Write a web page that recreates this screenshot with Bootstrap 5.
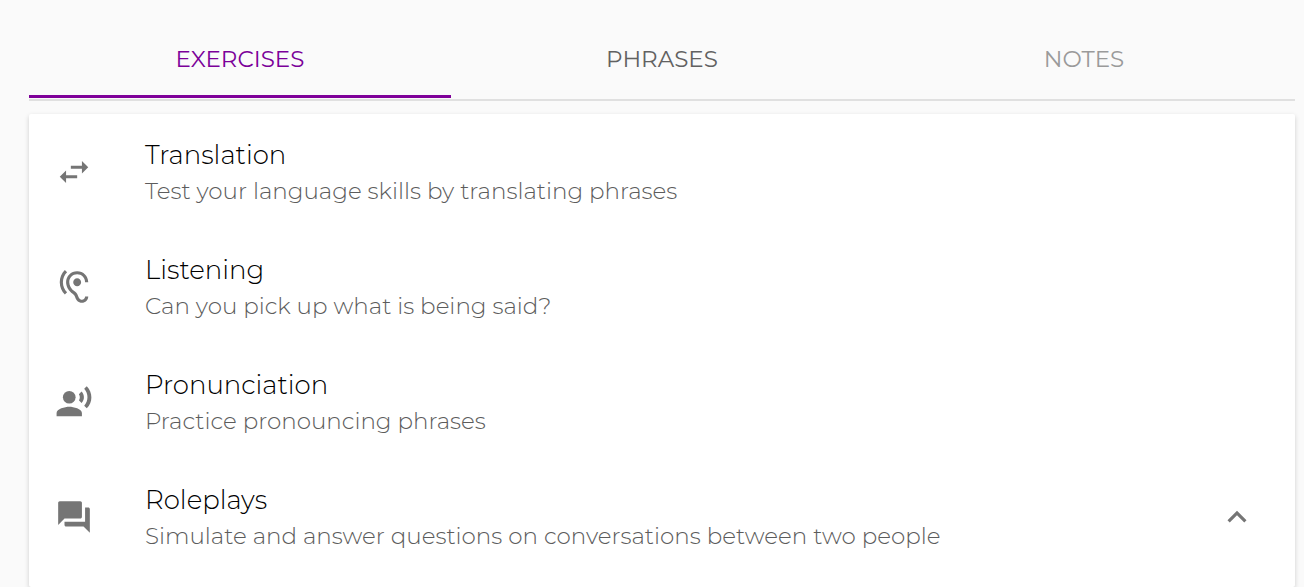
<!DOCTYPE html>
<html lang="en">
<head>
<meta charset="utf-8">
<meta name="viewport" content="width=device-width, initial-scale=1">
<title>Exercises</title>
<link rel="stylesheet" href="https://cdn.jsdelivr.net/npm/bootstrap@5.3.0/dist/css/bootstrap.min.css">
<style>
body { background: #fafafa; font-family: Montserrat, Inter, "Open Sans", sans-serif; color: #212121; }
.page { padding: 20px 9px 0 29px; }
.lesson-tabs { padding-bottom: 1px; border-bottom: 2px solid #e0e0e0; }
.lesson-tabs .nav-link { height: 78px; padding: 0; border: 0; border-radius: 0; background: none; color: #616161; font-size: 23px; line-height: 34px; }
.lesson-tabs .nav-link.active { color: #7b0099; box-shadow: inset 0 -3px #7f0099; }
.lesson-tabs .nav-link:disabled { color: #9a9a9a; }
.panel { margin-top: 13px; background: #fff; border-radius: 2px; box-shadow: 0 2px 5px rgba(0,0,0,.18); }
.exercise { min-height: 115px; padding: 0 39px 0 26px; border: 0; background: none; text-align: left; }
.exercise svg { width: 38px; height: 38px; fill: #757575; flex: none; }
.exercise-label { margin-left: 52px; padding-top: 2px; }
.exercise-title { font-size: 26px; line-height: 36px; color: #000; font-weight: 300; }
.exercise-text { font-size: 23px; line-height: 36px; color: #5c5c5c; font-weight: 300; }
</style>
</head>
<body>
<main class="page min-vh-100 d-flex flex-column">
  <nav class="nav nav-justified lesson-tabs" role="tablist" aria-label="Lesson sections">
    <button type="button" class="nav-link active" role="tab" aria-selected="true">EXERCISES</button>
    <button type="button" class="nav-link" role="tab" aria-selected="false">PHRASES</button>
    <button type="button" class="nav-link" role="tab" aria-selected="false" disabled>NOTES</button>
  </nav>
  <section class="panel flex-grow-1" role="tabpanel">
    <button type="button" class="exercise w-100 d-flex align-items-center">
      <svg viewBox="0 0 24 24" aria-hidden="true"><path d="M6.99 11 3 15l3.99 4v-3H14v-2H6.99zM21 9l-3.99-4v3H10v2h7.01v3z"/></svg>
      <span class="exercise-label">
        <span class="exercise-title d-block">Translation</span>
        <span class="exercise-text d-block">Test your language skills by translating phrases</span>
      </span>
    </button>
    <button type="button" class="exercise w-100 d-flex align-items-center">
      <svg viewBox="0 0 24 24" aria-hidden="true"><path d="M17 20c-.29 0-.56-.06-.76-.15-.71-.37-1.21-.88-1.71-2.38-.51-1.56-1.47-2.29-2.39-3-.79-.61-1.61-1.24-2.32-2.53C9.29 10.98 9 9.93 9 9c0-2.8 2.2-5 5-5s5 2.2 5 5h2c0-3.93-3.07-7-7-7S7 5.07 7 9c0 1.26.38 2.65 1.07 3.9.91 1.65 1.98 2.48 2.85 3.15.81.62 1.39 1.07 1.71 2.05.6 1.82 1.37 2.84 2.73 3.55.51.23 1.07.35 1.64.35 2.21 0 4-1.79 4-4h-2c0 1.1-.9 2-2 2zM7.64 2.64 6.22 1.22C4.23 3.21 3 5.96 3 9s1.23 5.79 3.22 7.78l1.41-1.41C6.01 13.74 5 11.49 5 9s1.01-4.74 2.64-6.36zM11.5 9c0 1.38 1.12 2.5 2.5 2.5s2.5-1.12 2.5-2.5-1.12-2.5-2.5-2.5-2.5 1.12-2.5 2.5z"/></svg>
      <span class="exercise-label">
        <span class="exercise-title d-block">Listening</span>
        <span class="exercise-text d-block">Can you pick up what is being said?</span>
      </span>
    </button>
    <button type="button" class="exercise w-100 d-flex align-items-center">
      <svg viewBox="0 0 24 24" aria-hidden="true"><circle cx="9" cy="9" r="4"/><path d="M9 15c-2.67 0-8 1.34-8 4v2h16v-2c0-2.66-5.33-4-8-4zm7.76-9.64-1.68 1.69c.84 1.18.84 2.71 0 3.89l1.68 1.69c2.02-2.02 2.02-5.07 0-7.27zM20.07 2l-1.63 1.63c2.77 3.02 2.77 7.56 0 10.74L20.07 16c3.9-3.89 3.91-9.95 0-14z"/></svg>
      <span class="exercise-label">
        <span class="exercise-title d-block">Pronunciation</span>
        <span class="exercise-text d-block">Practice pronouncing phrases</span>
      </span>
    </button>
    <button type="button" class="exercise w-100 d-flex align-items-center" aria-expanded="true">
      <svg viewBox="0 0 24 24" aria-hidden="true"><path d="M21 6h-2v9H6v2c0 .55.45 1 1 1h11l4 4V7c0-.55-.45-1-1-1zm-4 6V3c0-.55-.45-1-1-1H3c-.55 0-1 .45-1 1v14l4-4h10c.55 0 1-.45 1-1z"/></svg>
      <span class="exercise-label">
        <span class="exercise-title d-block">Roleplays</span>
        <span class="exercise-text d-block">Simulate and answer questions on conversations between two people</span>
      </span>
      <svg class="ms-auto" viewBox="0 0 24 24" aria-hidden="true"><path d="m12 8-6 6 1.41 1.41L12 10.83l4.59 4.58L18 14z"/></svg>
    </button>
  </section>
</main>
<script src="https://cdn.jsdelivr.net/npm/bootstrap@5.3.0/dist/js/bootstrap.bundle.min.js"></script>
</body>
</html>
